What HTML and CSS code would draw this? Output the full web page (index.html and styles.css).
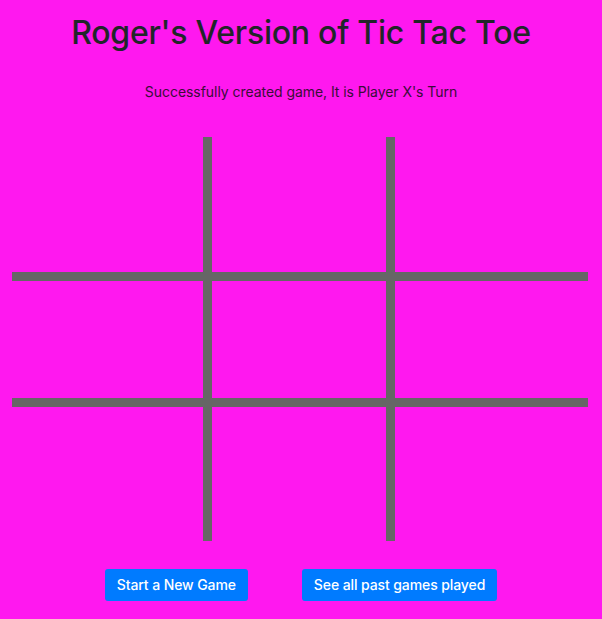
FILE: index.html
```html
<!DOCTYPE html>
<html>
<head>
<meta charset="utf-8">
<link rel="stylesheet" href="styles.css">
</head>
<body>
<div class="page">
  <h1 class="title">Roger's Version of Tic Tac Toe</h1>
  <p class="status">Successfully created game, It is Player X's Turn</p>
  <div class="board">
    <div class="cell"></div>
    <div class="cell mid-col"></div>
    <div class="cell"></div>
    <div class="cell mid-row"></div>
    <div class="cell mid-row mid-col"></div>
    <div class="cell mid-row"></div>
    <div class="cell"></div>
    <div class="cell mid-col"></div>
    <div class="cell"></div>
  </div>
  <div class="actions">
    <button class="btn">Start a New Game</button>
    <button class="btn">See all past games played</button>
  </div>
</div>
</body>
</html>
```

FILE: styles.css
```css
html, body {
  margin: 0;
  padding: 0;
  background: #ff18ef;
  height: 100%;
}
body {
  font-family: Inter, "Noto Sans", "Liberation Sans", sans-serif;
  color: #212529;
}
.page {
  display: flex;
  flex-direction: column;
  align-items: center;
}
.title {
  margin: 13px 0 0;
  font-size: 32px;
  line-height: 40px;
  font-weight: 500;
  letter-spacing: -0.25px;
}
.status {
  margin: 30px 0 0;
  font-size: 14px;
  line-height: 18px;
  color: #3a0d38;
  letter-spacing: -0.05px;
}
.board {
  margin-top: 36px;
  width: 576px;
  display: grid;
  grid-template-columns: 191px 192px 193px;
  grid-template-rows: 135px 135px 134px;
  margin-right: 2px;
}
.cell {
  box-sizing: border-box;
}
.mid-col {
  border-left: 9px solid #666;
  border-right: 9px solid #666;
}
.mid-row {
  border-top: 9px solid #666;
  border-bottom: 9px solid #666;
}
.actions {
  margin-top: 28px;
  display: flex;
  gap: 54px;
}
.btn {
  font-family: Inter, "Noto Sans", "Liberation Sans", sans-serif;
  font-size: 14px;
  line-height: 20px;
  padding: 6px 12px;
  border: none;
  border-radius: 3px;
  background: #007bff;
  color: #fff;
  font-weight: 500;
  letter-spacing: -0.1px;
}
```
